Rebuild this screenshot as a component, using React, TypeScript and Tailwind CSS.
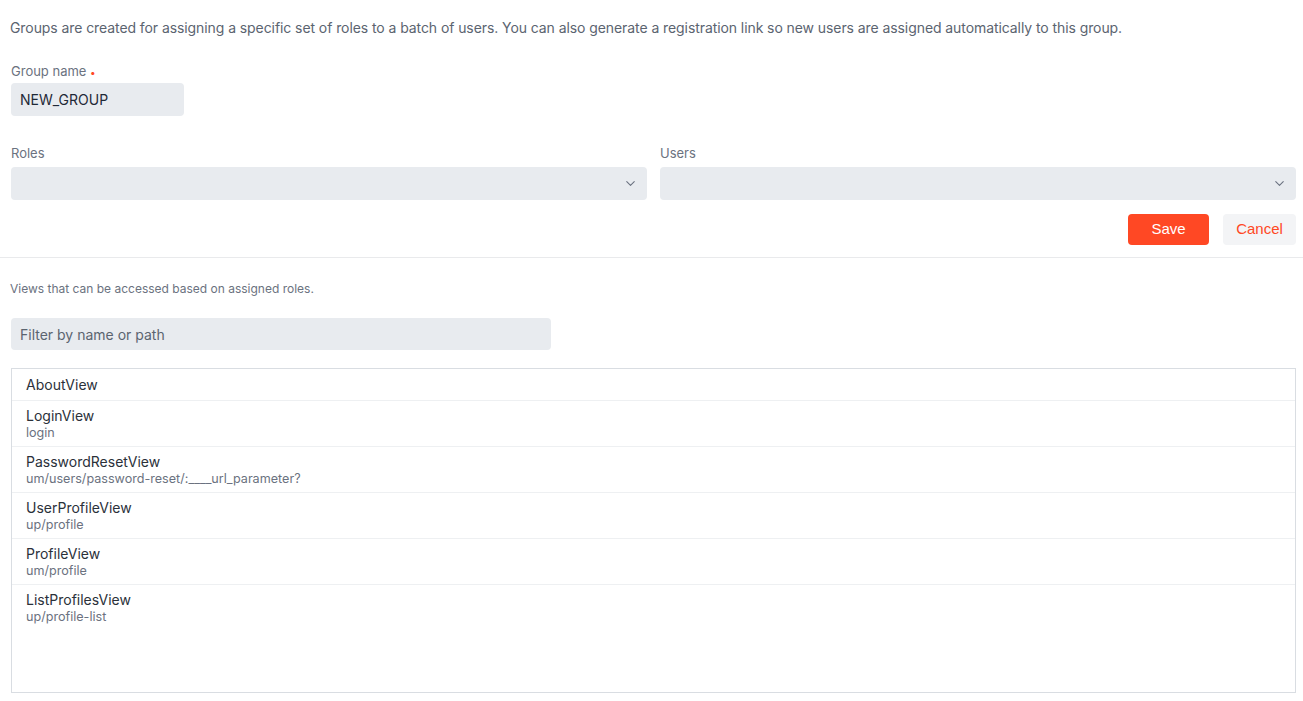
import { ChevronDown } from "lucide-react";

interface ViewItem {
  name: string;
  path?: string;
}

const views: ViewItem[] = [
  { name: "AboutView" },
  { name: "LoginView", path: "login" },
  { name: "PasswordResetView", path: "um/users/password-reset/:____url_parameter?" },
  { name: "UserProfileView", path: "up/profile" },
  { name: "ProfileView", path: "um/profile" },
  { name: "ListProfilesView", path: "up/profile-list" },
];

function SelectBox({ label }: { label: string }) {
  return (
    <div className="flex-1 flex flex-col">
      <label className="text-[13px] text-[#6b7280] h-[26px] pt-[4px] leading-[16px]">{label}</label>
      <div className="h-[33px] bg-[#e8ebef] rounded-[4px] flex items-center justify-end pr-[9px]">
        <ChevronDown className="w-[15px] h-[15px] text-[#6b7280]" strokeWidth={1.75} />
      </div>
    </div>
  );
}

export default function App() {
  return (
    <div className="w-[1303px] h-[701px] bg-white font-['Inter',sans-serif] overflow-hidden">
      <div className="pl-[11px] pr-[7px]">
        <p className="pt-[18px] text-[14px] leading-[20px] text-[#5b6470] -ml-[1px] tracking-[-0.08px]">
          Groups are created for assigning a specific set of roles to a batch of users. You can also generate a
          registration link so new users are assigned automatically to this group.
        </p>

        <div className="mt-[25px] flex flex-col">
          <label className="text-[13px] text-[#6b7280] leading-[16px] h-[20px]">
            Group name <span className="text-[#ff4824] text-[10px] align-middle">•</span>
          </label>
          <div className="w-[173px] h-[33px] bg-[#e8ebef] rounded-[4px] flex items-center px-[9px] text-[14px] text-[#1f2937]">
            NEW_GROUP
          </div>
        </div>

        <div className="mt-[25px] flex gap-[13px]">
          <SelectBox label="Roles" />
          <SelectBox label="Users" />
        </div>

        <div className="mt-[14px] flex justify-end gap-[14px] font-['Liberation_Sans',sans-serif]">
          <button className="w-[81px] h-[31px] rounded-[4px] bg-[#ff4824] text-white text-[15px]">Save</button>
          <button className="w-[73px] h-[31px] rounded-[4px] bg-[#f3f4f6] text-[#ff4824] text-[15px]">Cancel</button>
        </div>
      </div>

      <div className="mt-[12px] h-px bg-[#e9eaec]" />

      <div className="pl-[11px] pr-[7px]">
        <p className="pt-[24px] text-[12px] leading-[14px] text-[#6b7280] -ml-[1px]">
          Views that can be accessed based on assigned roles.
        </p>

        <div className="mt-[22px] w-[540px] h-[32px] bg-[#e8ebef] rounded-[4px] flex items-center px-[9px] text-[14px] text-[#5b6470]">
          Filter by name or path
        </div>

        <div className="mt-[18px] h-[325px] border border-[#d9dde2] flex flex-col">
          {views.map((v, i) => (
            <div
              key={v.name}
              className={`px-[14px] flex flex-col justify-center ${i < views.length - 1 ? "border-b border-[#eef0f2]" : ""} ${v.path ? "h-[46px]" : "h-[32px]"}`}
            >
              <span className="text-[14px] leading-[18px] text-[#2b313a]">{v.name}</span>
              {v.path && <span className="text-[12.6px] leading-[16px] text-[#6b7280]">{v.path}</span>}
            </div>
          ))}
        </div>
      </div>
    </div>
  );
}
